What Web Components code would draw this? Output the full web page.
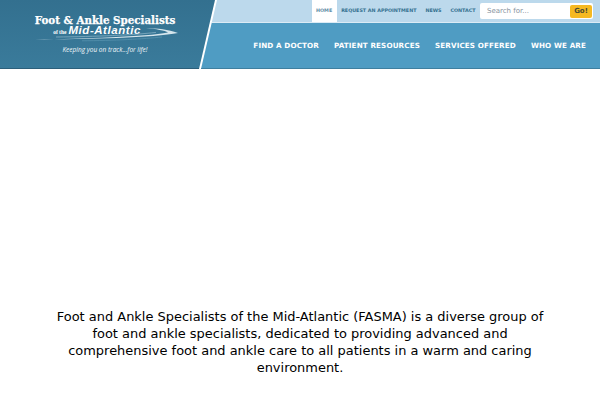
<!DOCTYPE html>
<html>
<head>
<meta charset="utf-8">
<title>Foot and Ankle Specialists of the Mid-Atlantic</title>
<style>
    html, body { margin: 0; padding: 0; background: #fff; }
    body { font-family: "DejaVu Sans", sans-serif; overflow: hidden; }
</style>
</head>
<body>
<fasma-header>
    <fasma-logo slot="logo"></fasma-logo>
    <fasma-utility slot="utility">
        <a slot="links" class="active" href="#">Home</a>
        <a slot="links" href="#">Request an Appointment</a>
        <a slot="links" href="#">News</a>
        <a slot="links" href="#">Contact</a>
    </fasma-utility>
    <fasma-nav slot="nav">
        <a href="#">Find a Doctor</a>
        <a href="#">Patient Resources</a>
        <a href="#">Services Offered</a>
        <a href="#">Who We Are</a>
    </fasma-nav>
</fasma-header>
<fasma-intro>Foot and Ankle Specialists of the Mid-Atlantic (FASMA) is a diverse group of foot and ankle specialists, dedicated to providing advanced and comprehensive foot and ankle care to all patients in a warm and caring environment.</fasma-intro>

<script>
class FasmaHeader extends HTMLElement {
    constructor() {
        super();
        this._shadowRoot = this.attachShadow({mode: "open"})
    }

    connectedCallback() {
        this._shadowRoot.innerHTML = `
            <style>
                :host {
                    display: flex;
                    height: 69px;
                    background: #fff;
                }
                .brand {
                    width: 216px;
                    flex: none;
                    background: linear-gradient(#33708f, #3a7b9b);
                    border-bottom: 1px solid #2c5f7a;
                    box-sizing: border-box;
                    clip-path: polygon(0 0, 215px 0, 199px 100%, 0 100%);
                }
                .right {
                    flex: 1;
                    margin-left: -17px;
                    display: flex;
                    flex-direction: column;
                    clip-path: polygon(18px 0, 100% 0, 100% 100%, 2px 100%);
                }
            </style>
            <div class="brand"><slot name="logo"></slot></div>
            <div class="right">
                <slot name="utility"></slot>
                <slot name="nav"></slot>
            </div>
        `
    }
}

class FasmaLogo extends HTMLElement {
    constructor() {
        super();
        this._shadowRoot = this.attachShadow({mode: "open"})
    }

    connectedCallback() {
        this._shadowRoot.innerHTML = `
            <style>
                :host {
                    display: flex;
                    flex-direction: column;
                    align-items: center;
                    width: 210px;
                    padding-top: 15px;
                    color: #fff;
                    position: relative;
                }
                .name {
                    font: bold 10.3px/10px "DejaVu Serif", serif;
                    -webkit-text-stroke: .25px #fff;
                    white-space: nowrap;
                }
                .sub {
                    display: flex;
                    align-items: baseline;
                    gap: 2px;
                    padding-right: 16px;
                    white-space: nowrap;
                    line-height: 10px;
                }
                .sub i {
                    font: italic bold 11.5px/10px "Liberation Sans", sans-serif;
                    letter-spacing: .55px;
                }
                .sub small {
                    font: bold 5.5px/10px "Liberation Serif", serif;
                }
                svg {
                    position: absolute;
                    left: 34px;
                    top: 26px;
                }
                .tag {
                    margin-top: 9px;
                    font: italic 6.5px/8px "Open Sans", sans-serif;
                    color: #f0f6f9;
                }
            </style>
            <div class="name">Foot &amp; Ankle Specialists</div>
            <div class="sub"><small>of the</small><i>Mid-Atlantic</i></div>
            <svg width="146" height="16" viewBox="0 0 146 16" fill="none">
                <path d="M1 13.4 C50 13.4 122 11.5 144 7 C134 3.5 124 2.4 112 2 C122 3 131 4.6 134 6.4 C112 10.6 50 12.6 1 13.4Z" fill="#d5e5ec"/>
                <path d="M22 11 C62 10.6 100 9 122 6.4" stroke="#8fb7ca" stroke-width=".7"/>
                <path d="M48 14.8 C80 14.6 110 13 128 11" stroke="#5f9ab5" stroke-width=".6"/>
            </svg>
            <div class="tag">Keeping you on track...for life!</div>
        `
    }
}

class FasmaUtility extends HTMLElement {
    constructor() {
        super();
        this._shadowRoot = this.attachShadow({mode: "open"})
    }

    connectedCallback() {
        this._shadowRoot.innerHTML = `
            <style>
                :host {
                    display: flex;
                    justify-content: flex-end;
                    align-items: stretch;
                    height: 22px;
                    background: #bcd9ec;
                    border-bottom: 1px solid #dcebf5;
                }
                .links {
                    display: flex;
                }
                ::slotted(a) {
                    display: flex;
                    align-items: center;
                    padding: 0 4.5px;
                    font: bold 4.8px/1 "DejaVu Sans", sans-serif;
                    text-transform: uppercase;
                    text-decoration: none;
                    color: #33708f;
                    white-space: nowrap;
                }
                ::slotted(a.active) {
                    background: #fff;
                    color: #5f8ea6;
                }
                .search {
                    display: flex;
                    align-items: center;
                    justify-content: space-between;
                    box-sizing: border-box;
                    width: 113px;
                    height: 16px;
                    margin: 3px 7px 0 0;
                    padding: 0 1px 0 7px;
                    background: #fff;
                    border-radius: 2px;
                    font: 7px "DejaVu Sans", sans-serif;
                    color: #87939e;
                }
                .go {
                    display: flex;
                    align-items: center;
                    justify-content: center;
                    width: 22px;
                    height: 13px;
                    background: #f5b921;
                    border-radius: 2px;
                    font: bold 7px "DejaVu Sans", sans-serif;
                    color: #4a4a30;
                }
            </style>
            <div class="links"><slot name="links"></slot></div>
            <div class="search"><span>Search for...</span><span class="go">Go!</span></div>
        `
    }
}

class FasmaNav extends HTMLElement {
    constructor() {
        super();
        this._shadowRoot = this.attachShadow({mode: "open"})
    }

    connectedCallback() {
        this._shadowRoot.innerHTML = `
            <style>
                :host {
                    display: flex;
                    justify-content: flex-end;
                    align-items: center;
                    gap: 15px;
                    flex: 1;
                    padding-right: 14px;
                    background: #4f9cc3;
                    border-bottom: 1px solid #3f7f9f;
                }
                ::slotted(a) {
                    font: bold 7.2px/1 "DejaVu Sans", sans-serif;
                    letter-spacing: .12px;
                    text-transform: uppercase;
                    text-decoration: none;
                    color: #fff;
                    white-space: nowrap;
                }
            </style>
            <slot></slot>
        `
    }
}

class FasmaIntro extends HTMLElement {
    constructor() {
        super();
        this._shadowRoot = this.attachShadow({mode: "open"})
    }

    connectedCallback() {
        this._shadowRoot.innerHTML = `
            <style>
                :host {
                    display: block;
                    box-sizing: border-box;
                    padding: 239px 50px 0;
                    font: 12.96px/17px "DejaVu Sans", sans-serif;
                    color: #000;
                    text-align: center;
                }
            </style>
            <slot></slot>
        `
    }
}

window.customElements.define('fasma-header', FasmaHeader)
window.customElements.define('fasma-logo', FasmaLogo)
window.customElements.define('fasma-utility', FasmaUtility)
window.customElements.define('fasma-nav', FasmaNav)
window.customElements.define('fasma-intro', FasmaIntro)
</script>
</body>
</html>
